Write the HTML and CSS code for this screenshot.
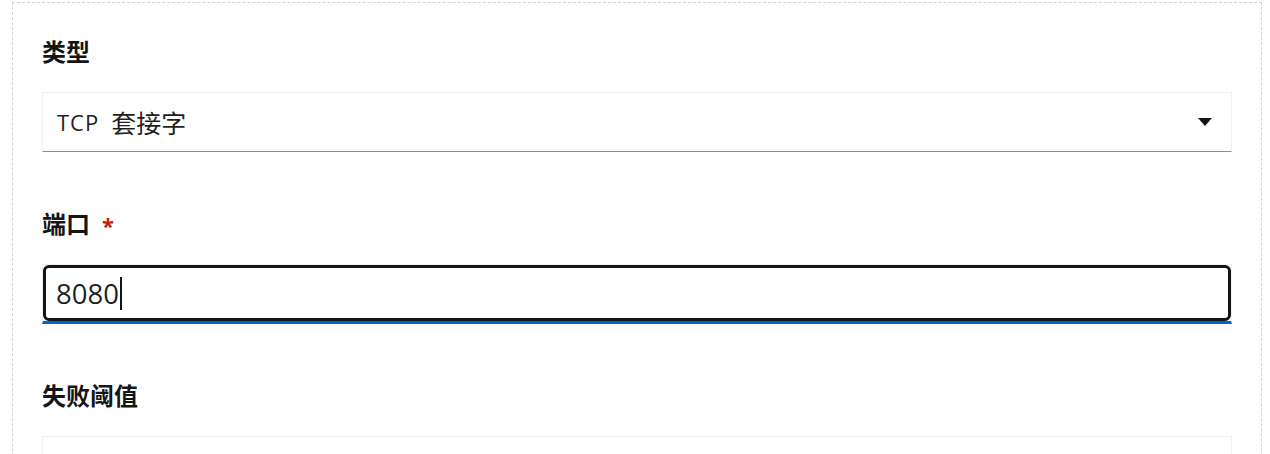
FILE: index.html
```html
<!DOCTYPE html>
<html lang="zh">
<head>
<meta charset="utf-8">
<title>表单</title>
<link rel="stylesheet" href="styles.css">
</head>
<body>
<div class="panel">
  <div class="group">
    <div class="label">类型</div>
    <div class="select">
      <span class="value"><span class="latin">TCP</span><span class="cjk">套接字</span></span>
      <svg class="caret" width="14" height="8" viewBox="0 0 14 8"><path d="M0 0 H14 L7 8 Z" fill="#151515"/></svg>
    </div>
  </div>
  <div class="group">
    <div class="label">端口<span class="req">*</span></div>
    <div class="input focused">
      <div class="inner"><span class="num">8080</span><span class="cursor"></span></div>
    </div>
  </div>
  <div class="group">
    <div class="label">失败阈值</div>
    <div class="input"></div>
  </div>
</div>
</body>
</html>
```
FILE: styles.css
```css
html, body {
  margin: 0;
  padding: 0;
  background: #fff;
}
body {
  font-family: "Open Sans", "Noto Sans CJK SC", sans-serif;
  color: #151515;
  overflow: hidden;
  height: 454px;
}
.panel {
  margin: 2px 8px 0 12px;
  border: 1px dashed #d2d2d2;
  padding: 33px 29px 0 29px;
  height: 600px;
  display: flex;
  flex-direction: column;
  gap: 56px;
}
.group {
  display: flex;
  flex-direction: column;
  gap: 26px;
}
.label {
  height: 30px;
  line-height: 30px;
  font-family: "Noto Sans CJK SC", sans-serif;
  font-weight: 700;
  font-size: 24px;
  display: flex;
  align-items: center;
}
.req {
  color: #c9190b;
  font-family: "Open Sans", sans-serif;
  font-size: 22px;
  margin-left: 12px;
  position: relative;
  top: 2px;
}
.select {
  height: 60px;
  box-sizing: border-box;
  border: 1px solid #f0f0f0;
  border-bottom: 1px solid #8a8d90;
  display: flex;
  align-items: center;
  justify-content: space-between;
  padding: 0 19px 0 14px;
}
.value {
  display: flex;
  align-items: center;
  color: #1f1f1f;
}
.latin {
  font-family: "Open Sans", sans-serif;
  font-size: 22px;
  letter-spacing: 1px;
}
.cjk {
  font-family: "Noto Sans CJK SC", sans-serif;
  font-size: 25px;
  margin-left: 12px;
}
.caret {
  display: block;
}
.input {
  height: 60px;
  box-sizing: border-box;
  border: 1px solid #f0f0f0;
}
.input.focused {
  border-bottom: 3px solid #0066cc;
  display: flex;
}
.inner {
  flex: 1;
  border: 3px solid #151515;
  border-radius: 6px;
  display: flex;
  align-items: center;
  padding-left: 10px;
}
.num {
  font-family: "Open Sans", sans-serif;
  font-size: 27.5px;
  color: #1f1f1f;
}
.cursor {
  width: 2px;
  height: 33px;
  background: #151515;
  margin-left: 1px;
}
```
